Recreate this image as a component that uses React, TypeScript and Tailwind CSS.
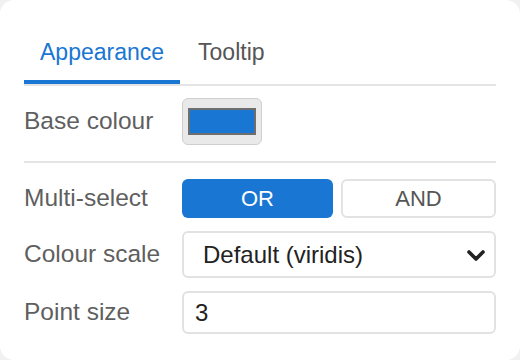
import React from 'react';

const App: React.FC = () => {
  return (
    <div className="w-[520px] h-[360px] bg-[#f1f1f1]" style={{ fontFamily: '"Liberation Sans", Arial, sans-serif' }}>
      <div className="h-full rounded-[14px] bg-white px-6 pt-6">
        {/* Tabs */}
        <div className="flex border-b-2 border-[#e4e4e4]">
          <div className="box-border flex h-[60px] items-center border-b-4 border-[#1976d2] px-4 text-[23px] text-[#1976d2]">
            Appearance
          </div>
          <div className="flex h-[60px] items-center px-[18px] pb-1 text-[23px] text-[#555]">Tooltip</div>
        </div>

        {/* Base colour */}
        <div className="grid grid-cols-[158px_1fr] items-center border-b-2 border-[#e4e4e4] pt-3 pb-4">
          <span className="text-[24.5px] text-[#5f5f5f]">Base colour</span>
          <div className="flex h-[47px] w-[80px] items-center justify-center rounded-[6px] border border-[#cfcfcf] bg-[#e9e9e9]">
            <div className="h-[27px] w-[68px] border-2 border-[#6e6e6e] bg-[#1976d2]" />
          </div>
        </div>

        {/* Settings */}
        <div className="mt-4 grid grid-cols-[158px_1fr] items-center gap-y-[13px]">
          <span className="text-[24.5px] text-[#5f5f5f]">Multi-select</span>
          <div className="flex gap-2">
            <button className="h-[39px] flex-1 rounded-[6px] bg-[#1976d2] text-[22px] text-white">OR</button>
            <button className="h-[39px] flex-1 rounded-[6px] border-2 border-[#e2e2e2] bg-white text-[22px] text-[#555]">AND</button>
          </div>

          <span className="text-[24.5px] text-[#5f5f5f]">Colour scale</span>
          <div className="flex h-[47px] items-center justify-between rounded-[6px] border-2 border-[#e2e2e2] pl-[19px] pr-[8px]">
            <span className="text-[24px] text-[#222]">Default (viridis)</span>
            <svg width="20" height="14" viewBox="0 0 20 14" className="mt-[2px]">
              <polyline points="3,3 10,10 17,3" fill="none" stroke="#222" strokeWidth="3.6" strokeLinecap="round" strokeLinejoin="round" />
            </svg>
          </div>

          <span className="text-[24.5px] text-[#5f5f5f]">Point size</span>
          <div className="flex h-[43px] items-center rounded-[6px] border-2 border-[#e2e2e2] pl-[11px]">
            <span className="text-[24px] text-[#222]">3</span>
          </div>
        </div>
      </div>
    </div>
  );
};

export default App;
